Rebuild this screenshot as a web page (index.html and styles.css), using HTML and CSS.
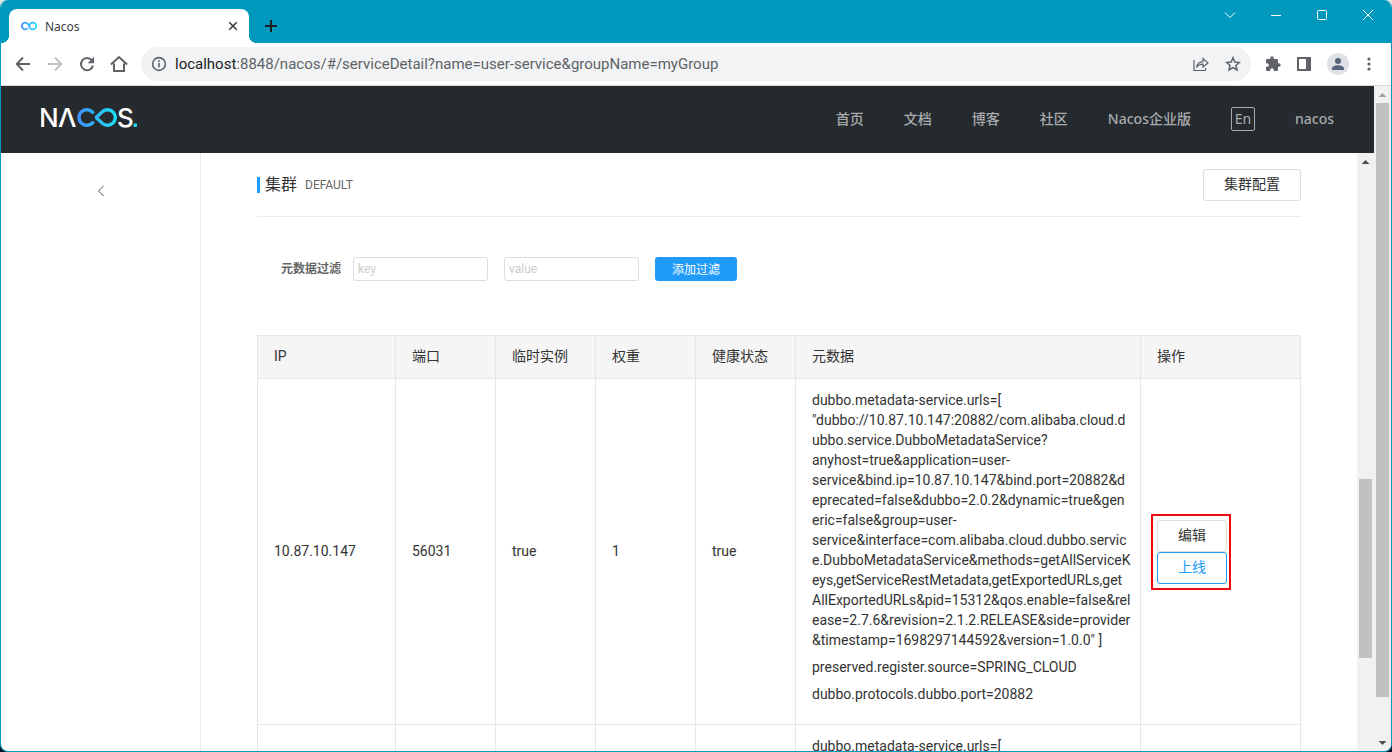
FILE: index.html
```html
<!DOCTYPE html>
<html lang="zh-CN">
<head>
<meta charset="utf-8">
<title>Nacos</title>
<link rel="stylesheet" href="styles.css">
</head>
<body>
<div class="window">
  <div class="titlebar">
    <div class="tab">
      <svg class="favicon" width="18" height="12" viewBox="0 0 18 12" fill="none" stroke="url(#fg)" stroke-width="1.8">
        <defs><linearGradient id="fg" x1="0" x2="18" y1="0" y2="0" gradientUnits="userSpaceOnUse"><stop stop-color="#4a8cff"/><stop offset="1" stop-color="#1be1f6"/></linearGradient></defs>
        <path d="M7.8 8.2A3.4 3.4 0 1 1 7.8 3.8"/><circle cx="12.8" cy="6" r="3.4"/><path d="M7.4 3.2 9.5 6"/>
      </svg>
      <span class="tab-title">Nacos</span>
      <button class="plain tab-close" aria-label="关闭标签页"><svg width="10" height="10" viewBox="0 0 10 10" stroke="#3c4043" stroke-width="1.6"><path d="M1.2 1.2l7.6 7.6M8.8 1.2 1.2 8.8"/></svg></button>
    </div>
    <button class="plain new-tab" aria-label="新标签页"><svg width="12" height="12" viewBox="0 0 12 12" stroke="#202124" stroke-width="2"><path d="M6 0v12M0 6h12"/></svg></button>
    <div class="controls">
      <button class="plain ctl" aria-label="搜索标签页"><svg width="12" height="12" viewBox="0 0 12 12" fill="none" stroke="#fff"><path d="M1 3.5l5 5 5-5"/></svg></button>
      <button class="plain ctl" aria-label="最小化"><svg width="12" height="12" viewBox="0 0 12 12" fill="none" stroke="#fff"><path d="M1 6.5h10"/></svg></button>
      <button class="plain ctl" aria-label="最大化"><svg width="12" height="12" viewBox="0 0 12 12" fill="none" stroke="#fff"><rect x="1.5" y="1.5" width="9" height="9" rx="1"/></svg></button>
      <button class="plain ctl" aria-label="关闭"><svg width="12" height="12" viewBox="0 0 12 12" fill="none" stroke="#fff"><path d="M1 1l10 10M11 1 1 11"/></svg></button>
    </div>
  </div>
  <div class="toolbar">
    <button class="plain nav" aria-label="后退"><svg width="16" height="16" viewBox="0 0 16 16" fill="none" stroke="#5f6368" stroke-width="2"><path d="M15 8H2M8 1.5 1.8 8 8 14.5"/></svg></button>
    <button class="plain nav" aria-label="前进"><svg width="16" height="16" viewBox="0 0 16 16" fill="none" stroke="#bdc1c6" stroke-width="2"><path d="M1 8h13M8 1.5 14.2 8 8 14.5"/></svg></button>
    <button class="plain nav" aria-label="刷新"><svg width="16" height="16" viewBox="0 0 16 16" fill="none"><path d="M12.8 4.2A6.1 6.1 0 1 0 14 9.5" stroke="#5f6368" stroke-width="2"/><path d="M15 .8v6.4H8.6z" fill="#5f6368"/></svg></button>
    <button class="plain nav" aria-label="主页"><svg width="18" height="18" viewBox="0 0 18 18" fill="none" stroke="#5f6368" stroke-width="2"><path d="M.9 9.6 9 2l8.1 7.600M4 8.500V16h10V8.500"/></svg></button>
    <div class="omnibox">
      <svg width="16" height="16" viewBox="0 0 16 16" fill="none" stroke="#5f6368" stroke-width="1.6"><circle cx="8" cy="8" r="6.4"/><path d="M8 7v4.2M8 4.2v1.7"/></svg>
      <div class="url"><span class="host">localhost</span>:8848/nacos/#/serviceDetail?name=user-service&amp;groupName=myGroup</div>
      <button class="plain" aria-label="分享"><svg width="16" height="16" viewBox="0 0 16 16" fill="none" stroke="#5f6368" stroke-width="1.2"><path d="M1 4v10.500h11.500V12M3.500 11.500C4 8 6 6 10 5.700V2.500L15 7l-5 4V8.200C7 8.200 5 9 3.500 11.500z"/></svg></button>
      <button class="plain" aria-label="收藏"><svg width="16" height="16" viewBox="0 0 16 16" fill="none" stroke="#5f6368" stroke-width="1.5"><path d="M8 1.800l1.800 4.300 4.600.4-3.500 3 1.100 4.500-4-2.400L4 14l1.100-4.500-3.500-3 4.600-.4z"/></svg></button>
    </div>
    <div class="actions">
      <button class="plain" aria-label="扩展程序"><svg width="16" height="16" viewBox="0 0 24 24" fill="#5f6368"><path d="M21 11h-1.500V6.500c0-1.100-.9-2-2-2h-4.500V3a2.500 2.500 0 0 0-5 0v1.500H3.500c-1.100 0-2 .9-2 2v4.300H3a2.700 2.700 0 0 1 0 5.400H1.500V20.500c0 1.100.9 2 2 2h4.300V21a2.700 2.700 0 0 1 5.400 0v1.500h4.300c1.100 0 2-.9 2-2V16H21a2.500 2.500 0 0 0 0-5z"/></svg></button>
      <button class="plain" aria-label="侧边栏"><svg width="14" height="14" viewBox="0 0 14 14"><path d="M0 0h14v14H0zM2 2v10h7V2z" fill="#5f6368" fill-rule="evenodd"/></svg></button>
      <button class="plain" aria-label="用户"><svg width="22" height="22" viewBox="0 0 22 22"><circle cx="11" cy="11" r="11" fill="#dee1e6"/><circle cx="11" cy="8" r="3" fill="#56637a"/><path d="M5 17v-1.500c0-2 3.500-3.200 6-3.200s6 1.200 6 3.200V17z" fill="#56637a"/></svg></button>
      <button class="plain" aria-label="菜单"><svg width="8" height="14" viewBox="0 0 8 14" fill="#5f6368"><circle cx="4" cy="2" r="1.600"/><circle cx="4" cy="7" r="1.600"/><circle cx="4" cy="12" r="1.600"/></svg></button>
    </div>
  </div>
  <div class="page">
    <div class="page-main">
      <header class="header">
        <svg width="98" height="35" viewBox="0 0 98 35" role="img" aria-label="NACOS">
          <defs><linearGradient id="lg" x1="36" x2="76" y1="0" y2="0" gradientUnits="userSpaceOnUse"><stop stop-color="#4190ff"/><stop offset="1" stop-color="#1be1f6"/></linearGradient></defs>
          <text class="mark" x="-2" y="25">N</text><text class="mark" x="17" y="25">Λ</text>
          <g fill="none" stroke="url(#lg)" stroke-width="3.400"><path d="M52.500 11.500A7.800 7.800 0 1 0 52.500 19.500"/><path d="M55 15.500 61.300 9.700A7.800 7.800 0 1 1 61.300 21.300z" stroke-linejoin="bevel"/></g>
          <text class="mark" x="76" y="25">S</text><rect x="92.500" y="21.500" width="3.500" height="3.500" rx="1" fill="#1be1f6"/>
        </svg>
        <nav class="menu">
          <a href="#">首页</a><a href="#">文档</a><a href="#">博客</a><a href="#">社区</a><a href="#">Nacos企业版</a>
          <button class="lang">En</button><a href="#">nacos</a>
        </nav>
      </header>
      <div class="body">
        <aside class="sidebar"><button class="plain" aria-label="返回"><svg width="8" height="12" viewBox="0 0 8 12" fill="none" stroke="#555"><path d="M6.500 1 1.500 6l5 5"/></svg></button></aside>
        <main class="content">
          <div class="card-head"><h2>集群</h2><span class="cluster">DEFAULT</span><button class="btn config">集群配置</button></div>
          <form class="filter">
            <label for="key">元数据过滤</label>
            <input id="key" placeholder="key"><input id="value" placeholder="value" aria-label="value">
            <button type="button" class="add">添加过滤</button>
          </form>
          <table>
            <colgroup><col class="c-ip"><col class="c-s"><col class="c-s"><col class="c-s"><col class="c-s"><col><col class="c-op"></colgroup>
            <thead><tr><th>IP</th><th>端口</th><th>临时实例</th><th>权重</th><th>健康状态</th><th>元数据</th><th>操作</th></tr></thead>
            <tbody>
              <tr>
                <td>10.87.10.147</td><td>56031</td><td>true</td><td>1</td><td>true</td>
                <td class="meta">
                  <p>dubbo.metadata-service.urls=[<br>"dubbo://10.87.10.147:20882/com.alibaba.cloud.d<br>ubbo.service.DubboMetadataService?<br>anyhost=true&amp;application=user-<br>service&amp;bind.ip=10.87.10.147&amp;bind.port=20882&amp;d<br>eprecated=false&amp;dubbo=2.0.2&amp;dynamic=true&amp;gen<br>eric=false&amp;group=user-<br>service&amp;interface=com.alibaba.cloud.dubbo.servic<br>e.DubboMetadataService&amp;methods=getAllServiceK<br>eys,getServiceRestMetadata,getExportedURLs,get<br>AllExportedURLs&amp;pid=15312&amp;qos.enable=false&amp;rel<br>ease=2.7.6&amp;revision=2.1.2.RELEASE&amp;side=provider<br>&amp;timestamp=1698297144592&amp;version=1.0.0" ]</p>
                  <p>preserved.register.source=SPRING_CLOUD</p>
                  <p>dubbo.protocols.dubbo.port=20882</p>
                </td>
                <td class="op-cell"><div class="ops"><button class="btn">编辑</button><button class="btn online">上线</button></div></td>
              </tr>
              <tr><td></td><td></td><td></td><td></td><td></td><td class="meta"><p>dubbo.metadata-service.urls=[</p></td><td></td></tr>
            </tbody>
          </table>
        </main>
        <div class="bar inner-bar"><i class="up dark"></i><i class="thumb"></i></div>
      </div>
    </div>
    <div class="bar outer-bar"><i class="up"></i><i class="thumb"></i><i class="down"></i></div>
  </div>
</div>
</body>
</html>
```
FILE: styles.css
```css
* { box-sizing: border-box; }
html { background: linear-gradient(#e4e4e4 50%, #001526 50%); }
body { margin: 0; font: 14px/20px Roboto, "Noto Sans CJK SC", sans-serif; color: #333; }
button, input { font-family: inherit; margin: 0; }
svg { display: block; flex: none; }
.plain { border: 0; padding: 0; background: none; display: flex; align-items: center; justify-content: center; }
.window { height: 100vh; display: flex; flex-direction: column; border: 1px solid #0098bc; border-top: 0; border-radius: 8px; overflow: hidden; background: #fff; }

.titlebar { flex: none; display: flex; height: 43px; background: #0098bc; padding-left: 8px; }
.tab { position: relative; align-self: flex-end; display: flex; align-items: center; width: 240px; height: 34px; padding: 0 11px; background: #fff; border-radius: 8px 8px 0 0; }
.tab::before, .tab::after { content: ""; position: absolute; bottom: 0; width: 8px; height: 8px; }
.tab::before { left: -8px; background: radial-gradient(circle at 0 0, transparent 8px, #fff 8px); }
.tab::after { right: -8px; background: radial-gradient(circle at 100% 0, transparent 8px, #fff 8px); }
.tab-title { flex: 1; margin-left: 7px; padding-top: 2px; font: 12px/16px "Noto Sans", sans-serif; color: #3c4043; }
.new-tab { width: 44px; margin-top: 9px; }
.controls { display: flex; margin-left: auto; }
.ctl { width: 46px; height: 30px; }

.toolbar { flex: none; display: flex; align-items: center; height: 43px; border-bottom: 1px solid #d8dbde; padding: 0 18px 0 6px; }
.nav { width: 32px; height: 32px; }
.omnibox { flex: 1; display: flex; align-items: center; gap: 16px; height: 34px; margin-left: 6px; padding: 0 10px; border-radius: 17px; background: #f1f3f4; }
.url { flex: 1; margin-left: -8px; font: 15px/20px Roboto, sans-serif; color: #5f6368; white-space: nowrap; overflow: hidden; }
.host { color: #202124; }
.actions { display: flex; align-items: center; gap: 16px; margin-left: 14px; }

.page { flex: 1; display: flex; min-height: 0; }
.page-main { flex: 1; display: flex; flex-direction: column; min-width: 0; }
.header { flex: none; display: flex; align-items: center; justify-content: space-between; height: 67px; padding: 0 40px; background: #252a2f; }
.mark { font: 500 26px Inter, sans-serif; fill: #fff; }
.menu { display: flex; align-items: center; gap: 40px; padding-bottom: 2px; font: 500 14px/20px "Noto Sans", "Noto Sans CJK SC", sans-serif; }
.menu a { color: #a8aaac; text-decoration: none; }
.lang { width: 24px; height: 24px; padding: 0; border: 1px solid #a8aaac; border-radius: 2px; background: none; color: #a8aaac; font-size: 14px; line-height: 20px; }

.body { flex: 1; display: flex; min-height: 0; }
.sidebar { flex: none; width: 200px; border-right: 1px solid #ebebeb; padding-top: 32px; }
.sidebar button { width: 100%; height: 12px; }
.content { flex: 1; min-width: 0; overflow: hidden; padding: 0 56px; }
.card-head { display: flex; align-items: center; height: 64px; border-bottom: 1px solid #ebebeb; }
h2 { margin: 0; padding-left: 5px; border-left: 3px solid #209bfa; font-size: 16px; line-height: 16px; font-weight: 400; }
.cluster { margin-left: 8px; font-size: 12px; color: #666; }
.btn { height: 32px; padding: 0 20px 2px; border: 1px solid #dcdee3; border-radius: 3px; background: #fff; color: #333; font-size: 14px; line-height: 20px; }
.config { margin-left: auto; }
.filter { display: flex; align-items: center; gap: 16px; padding: 40px 24px 54px; font-size: 12px; }
.filter label { color: #666; font-weight: 700; margin-right: -4px; }
.filter input { width: 135px; height: 24px; padding: 0 4px; border: 1px solid #dcdee3; border-radius: 3px; font-size: 12px; }
.filter input::placeholder { color: #ccc; }
.add { height: 24px; padding: 0 17px 2px; border: 0; border-radius: 3px; background: #209bfa; color: #fff; font-size: 12px; }

table { width: 100%; table-layout: fixed; border-collapse: collapse; }
th, td { border: 1px solid #e6e7eb; padding: 0 16px 2px; text-align: left; font-weight: 400; }
th { height: 43px; background: #f5f5f5; }
.c-ip { width: 138px; }
.c-s { width: 100px; }
.c-op { width: 160px; }
.meta { padding: 11px 16px 20px; white-space: nowrap; }
.meta p { margin: 0 0 7px; }
.meta p:last-child { margin: 0; }
.op-cell { padding-bottom: 0; }
.ops { position: relative; display: flex; flex-direction: column; width: 70px; }
.ops::after { content: ""; position: absolute; inset: -6px -4px -6px -6px; border: 2px solid #ee0a0a; }
.online { border-color: #209bfa; color: #209bfa; }

.bar { flex: none; display: flex; flex-direction: column; align-items: center; width: 17px; background: #f1f1f1; }
.thumb { width: 13px; background: #c1c1c1; }
.up, .down { width: 8px; height: 4px; margin: 7px 0 6px; background: #a3a3a3; clip-path: polygon(50% 0, 100% 100%, 0 100%); }
.dark { background: #505050; }
.down { margin-top: auto; background: #505050; clip-path: polygon(0 0, 100% 0, 50% 100%); }
.outer-bar .thumb { height: 89.3%; }
.inner-bar .thumb { height: 30%; margin-top: 309px; }
```
